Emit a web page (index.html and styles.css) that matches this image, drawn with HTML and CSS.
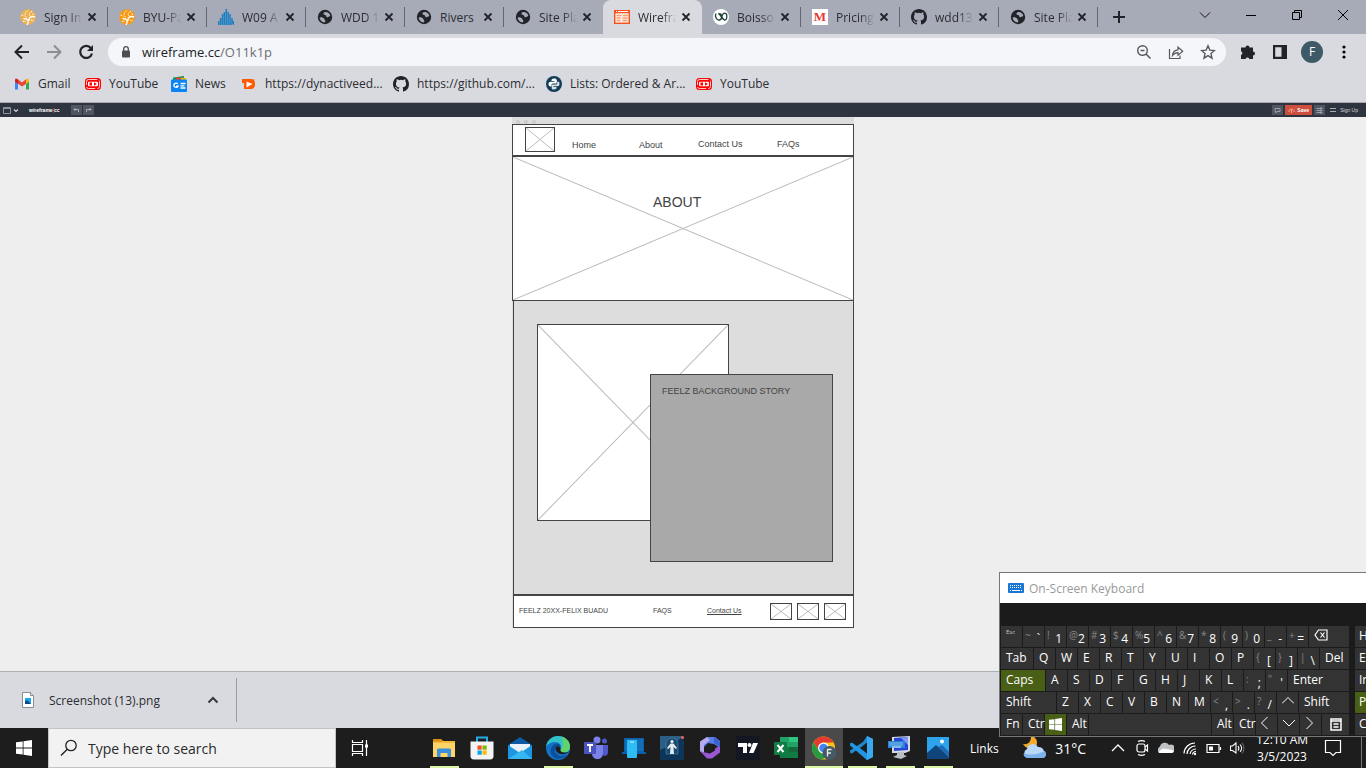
FILE: index.html
```html
<!DOCTYPE html>
<html lang="en">
<head>
<meta charset="utf-8">
<meta name="viewport" content="width=device-width, initial-scale=1">
<title>Wireframe.cc</title>
<link rel="stylesheet" href="styles.css">
</head>
<body>
<svg class="defs" aria-hidden="true">
  <defs>
    <symbol id="globe" viewBox="0 0 16 16"><circle cx="8" cy="8" r="7.200" fill="#202428"/><path d="M8.500 3c-1.500.3-2.300 1.200-2 2 .3.900 1.600.8 2.400 1.500.7.700.2 1.500 1.100 1.800.9.200 1.200-.6 2-.7 1 0 1.300-.6 1.200-1.400C12.700 4.600 10.800 3 8.500 3zM2.600 8.800c1.200-.7 2.800-.5 3.900.3.900.7.700 1.500 1.500 2.100.6.600.3 1.700-.3 2.200C5 13.200 2.900 11.400 2.600 8.800z" fill="#a8acb8"/></symbol>
    <symbol id="close" viewBox="0 0 16 16"><path d="M4.500 4.500l7 7M11.500 4.500l-7 7" stroke="#202428" stroke-width="1.800" fill="none"/></symbol>
    <symbol id="github" viewBox="0 0 16 16"><path fill="#202428" d="M8 0C3.580 0 0 3.580 0 8c0 3.540 2.290 6.530 5.470 7.590.4.070.55-.17.55-.38 0-.19-.01-.82-.01-1.490-2.010.37-2.530-.49-2.690-.94-.09-.23-.48-.94-.82-1.130-.28-.15-.68-.52-.01-.53.63-.01 1.080.58 1.230.82.72 1.210 1.870.87 2.330.66.070-.52.28-.87.51-1.070-1.780-.2-3.640-.89-3.640-3.950 0-.87.31-1.590.82-2.150-.08-.2-.36-1.020.08-2.120 0 0 .67-.21 2.200.82a7.600 7.600 0 0 1 4 0c1.530-1.040 2.200-.82 2.200-.82.44 1.100.16 1.920.08 2.120.51.56.82 1.270.82 2.150 0 3.070-1.870 3.750-3.650 3.950.29.25.54.73.54 1.480 0 1.070-.01 1.930-.01 2.200 0 .21.15.46.55.38A8 8 0 0 0 16 8c0-4.420-3.580-8-8-8z"/></symbol>
    <symbol id="youtube" viewBox="0 0 16 16"><rect x="0" y="2" width="16" height="12" rx="3.500" fill="#f00"/><rect x="1.500" y="3.500" width="13" height="9" rx="2" fill="none" stroke="#fff" stroke-width=".8" stroke-dasharray="9 2"/><rect x="3" y="5.700" width="10" height="4.600" rx="1" fill="#fff"/><path d="M4.500 6.500h2.500v3H4.500zM9 6.300l3 1.700-3 1.700z" fill="#f00"/></symbol>
    <symbol id="swirl" viewBox="0 0 16 16"><circle cx="8" cy="8" r="7.700" fill="currentColor"/><path d="M7 16C9.500 12 8 9.500 3.500 9.500M9 12C8.500 8.500 11 6.500 15 8" stroke="#fff" stroke-width="1.400" fill="none"/><path d="M6.500 8C4 6.500 5 3 8 1.500M10 7C8.500 5 9.500 3 12 2.500M1.500 6l3 1M3 12.500l3-.5M11 11l3 1M12.500 5l1.500.5" stroke="#fff" stroke-width="1" stroke-dasharray="1.500 1" fill="none"/></symbol>
    <symbol id="cross" viewBox="0 0 100 100" preserveAspectRatio="none"><path d="M0 0L100 100M100 0L0 100" stroke="#bbb" stroke-width="1" vector-effect="non-scaling-stroke" fill="none"/></symbol>
    <symbol id="winlogo" viewBox="0 0 16 16"><path fill="#fff" d="M0 2.300L6.700 1.400v6.200H0zM7.500 1.300L16 0v7.600H7.500zM0 8.400h6.700v6.200L0 13.700zM7.500 8.400H16V16l-8.500-1.300z"/></symbol>
  </defs>
</svg>

<header class="browser">
  <div class="tabstrip">
    <nav class="tabs" aria-label="Tabs">
      <div class="tab"><svg class="ico gold-light"><use href="#swirl"/></svg><a class="tab-title" href="#">Sign In</a><button class="tab-close" aria-label="Close tab"><svg class="ico"><use href="#close"/></svg></button></div>
      <div class="tab"><svg class="ico gold"><use href="#swirl"/></svg><a class="tab-title" href="#">BYU-Pa</a><button class="tab-close" aria-label="Close tab"><svg class="ico"><use href="#close"/></svg></button></div>
      <div class="tab"><svg class="ico" viewBox="0 0 16 16"><path d="M.7 16v-4M2.600 16V9M4.500 16V5M6.400 16V3M8.300 16V0M10.200 16V3M12.100 16V5M14 16V9M15.600 16v-4" stroke="#1b7fc4" stroke-width="1.500" fill="none"/></svg><a class="tab-title" href="#">W09 A</a><button class="tab-close" aria-label="Close tab"><svg class="ico"><use href="#close"/></svg></button></div>
      <div class="tab"><svg class="ico"><use href="#globe"/></svg><a class="tab-title" href="#">WDD 1</a><button class="tab-close" aria-label="Close tab"><svg class="ico"><use href="#close"/></svg></button></div>
      <div class="tab"><svg class="ico"><use href="#globe"/></svg><a class="tab-title full" href="#">Rivers</a><button class="tab-close" aria-label="Close tab"><svg class="ico"><use href="#close"/></svg></button></div>
      <div class="tab no-sep"><svg class="ico"><use href="#globe"/></svg><a class="tab-title" href="#">Site Pla</a><button class="tab-close" aria-label="Close tab"><svg class="ico"><use href="#close"/></svg></button></div>
      <div class="tab active"><svg class="ico" viewBox="0 0 16 16"><rect x=".7" y="1.700" width="14.600" height="12.600" fill="#fdeee6" stroke="#f4511e" stroke-width="1.400"/><path d="M0 3h16" stroke="#f4511e" stroke-width="2.500"/><path d="M2 2.500h1M4 2.500h10" stroke="#fff"/><path d="M2.500 6.500h5M2.500 9h4M2.500 11.500h4M9 6.500h5M8.500 9h5M8.500 11.500h5" stroke="#f9a077" stroke-width="1.500"/></svg><a class="tab-title" href="#" aria-current="page">Wirefra</a><button class="tab-close" aria-label="Close tab"><svg class="ico"><use href="#close"/></svg></button></div>
      <div class="tab"><svg class="ico" viewBox="0 0 16 16"><circle cx="8" cy="8" r="8" fill="#fff"/><path d="M3 4.500c-1.500 3 .5 7 3.500 6.500S9 5 5.500 4.500c2 1.500 3.500 5 5.500 6M7.500 4.500c1 3 2 6 4 6.500s3.500-4 1.500-6.500c-2-1-4 .5-4 3" fill="none" stroke="#173f33" stroke-width="1.300"/></svg><a class="tab-title" href="#">Boisso</a><button class="tab-close" aria-label="Close tab"><svg class="ico"><use href="#close"/></svg></button></div>
      <div class="tab"><span class="m-logo">M</span><a class="tab-title" href="#">Pricing</a><button class="tab-close" aria-label="Close tab"><svg class="ico"><use href="#close"/></svg></button></div>
      <div class="tab"><svg class="ico"><use href="#github"/></svg><a class="tab-title" href="#">wdd13</a><button class="tab-close" aria-label="Close tab"><svg class="ico"><use href="#close"/></svg></button></div>
      <div class="tab"><svg class="ico"><use href="#globe"/></svg><a class="tab-title" href="#">Site Pla</a><button class="tab-close" aria-label="Close tab"><svg class="ico"><use href="#close"/></svg></button></div>
      <button class="new-tab" aria-label="New tab"><svg width="14" height="14" viewBox="0 0 14 14"><path d="M7 1v12M1 7h12" stroke="#202428" stroke-width="2"/></svg></button>
    </nav>
    <div class="win-controls">
      <button aria-label="Search tabs"><svg width="12" height="12" viewBox="0 0 12 12"><path d="M1 3.500l5 5 5-5" fill="none" stroke="#111"/></svg></button>
      <button aria-label="Minimize"><svg width="12" height="12" viewBox="0 0 12 12"><path d="M1 6.500h10" stroke="#000"/></svg></button>
      <button aria-label="Restore"><svg width="12" height="12" viewBox="0 0 12 12"><path d="M1.500 3.500h7v7h-7zM3.500 3.500v-2h7v7h-2" fill="none" stroke="#000"/></svg></button>
      <button aria-label="Close window"><svg width="12" height="12" viewBox="0 0 12 12"><path d="M1 1l10 10M11 1L1 11" stroke="#000"/></svg></button>
    </div>
  </div>

  <div class="toolbar">
    <button class="tool" aria-label="Back"><svg class="ico" viewBox="0 0 16 16"><path d="M15 8H2M8 1.500L1.500 8 8 14.500" fill="none" stroke="#202428" stroke-width="2"/></svg></button>
    <button class="tool" aria-label="Forward"><svg class="ico" viewBox="0 0 16 16"><path d="M1 8h13M8 1.500L14.500 8 8 14.500" fill="none" stroke="#8b8d93" stroke-width="2"/></svg></button>
    <button class="tool" aria-label="Reload"><svg class="ico" viewBox="0 0 16 16"><path d="M13 4.300A6 6 0 1 0 14 9.500" fill="none" stroke="#202428" stroke-width="2.200"/><path d="M15 1v6H9z" fill="#202428"/></svg></button>
    <div class="omnibox">
      <svg class="lock" width="10" height="12" viewBox="0 0 10 12"><rect x="1" y="4.500" width="8" height="7" rx="1" fill="#4b4e54"/><path d="M2.700 5V3a2.300 2.300 0 0 1 4.600 0v2" fill="none" stroke="#4b4e54" stroke-width="1.300"/></svg>
      <a class="url" href="#">wireframe.cc<span>/O11k1p</span></a>
      <button class="tool" aria-label="Zoom"><svg class="ico" viewBox="0 0 16 16"><circle cx="6.500" cy="6.500" r="4.800" fill="none" stroke="#55585e" stroke-width="1.400"/><path d="M10 10l4.500 4.500M4.500 6.500h4" stroke="#55585e" stroke-width="1.500"/></svg></button>
      <button class="tool" aria-label="Share"><svg class="ico" viewBox="0 0 16 16"><path d="M1.500 5v9.500h10.500v-3M4.500 11.500c.3-4 2.500-5.500 5.500-5.700V3l4.700 4.300-4.700 4V8.700c-2.500 0-4 .8-5.500 2.800z" fill="none" stroke="#55585e" stroke-width="1.200"/></svg></button>
      <button class="tool" aria-label="Bookmark"><svg class="ico" viewBox="0 0 16 16"><path d="M8 1.800l1.800 4.300 4.700.4-3.500 3.100 1 4.600-4-2.500-4 2.500 1-4.600L1.500 6.500l4.700-.4z" fill="none" stroke="#55585e" stroke-width="1.400"/></svg></button>
    </div>
    <button class="tool" aria-label="Extensions"><svg class="ico" viewBox="0 0 16 16"><path d="M1 3.500h4.500a2 2 0 1 1 4 0H13v4a2 2 0 1 1 0 4V15H9.300a1.900 1.900 0 0 0-3.700 0H1v-4a2 2 0 0 0 0-3.800z" fill="#202428"/></svg></button>
    <button class="tool" aria-label="Side panel"><svg class="ico" viewBox="0 0 16 16"><path d="M1 1h14v14H1zM3.200 3.200v9.600h6.300V3.200z" fill="#202428" fill-rule="evenodd"/></svg></button>
    <button class="tool" aria-label="Profile"><span class="avatar">F</span></button>
    <button class="tool" aria-label="Menu"><svg class="ico" viewBox="0 0 16 16"><circle cx="8" cy="3" r="1.600"/><circle cx="8" cy="8" r="1.600"/><circle cx="8" cy="13" r="1.600"/></svg></button>
  </div>

  <nav class="bookmarks" aria-label="Bookmarks">
    <a href="#"><svg class="ico" viewBox="0 0 16 16"><path d="M1 3.500v10h3V7z" fill="#4285f4"/><path d="M15 3.500v10h-3V7z" fill="#34a853"/><path d="M1 3.800C1 2.500 2.500 2 3.500 3L8 6.500v4L1 5.500z" fill="#ea4335"/><path d="M8 6.500L12.500 3v4.500L8 10.500z" fill="#ea4335"/><path d="M12 3.400c1.500-1.400 3-.6 3 .8v1.500l-3 2.200z" fill="#fbbc04"/><path d="M1 3.800v1.800l3 2.200V3.300z" fill="#c5221f"/></svg>Gmail</a>
    <a href="#"><svg class="ico"><use href="#youtube"/></svg>YouTube</a>
    <a href="#"><svg class="ico" viewBox="0 0 16 16"><path d="M2 1.500L13 0v5H2z" fill="#0f9d58"/><path d="M9 2h6v4H9z" fill="#fbbc04"/><path d="M5 1.500h5V5H5z" fill="#ea4335"/><rect y="3.500" width="16" height="12.500" rx="1" fill="#0b84f3"/><path d="M6.800 7.800a2.200 2.200 0 1 0 .3 2.400H5M9.500 7.500h5M9.500 9.800h4M9.500 12h5" fill="none" stroke="#fff" stroke-width="1.300"/></svg>News</a>
    <a href="#"><svg class="ico" viewBox="0 0 16 16"><path d="M1 3h9c3 0 4 2.300 4 5s-1 5-4 5H3V7H1z" fill="#ff5a00"/><path d="M5.500 5.500l6 2.500-6 3.500V8z" fill="#fff"/><path d="M12 3h2v2z" fill="#f7a070"/></svg>https://dynactiveed...</a>
    <a href="#"><svg class="ico"><use href="#github"/></svg>https://github.com/...</a>
    <a href="#"><svg class="ico" viewBox="0 0 16 16"><circle cx="8" cy="8" r="8" fill="#123d58"/><path d="M8 2.500c-2.500 0-2.500 1-2.500 2.500h3v.8H4.500C3 6 2.500 7 2.500 8.200S3 10.500 4.500 10.500h1V9c0-1 .8-1.500 1.700-1.500h2.300c.8 0 1.300-.5 1.300-1.300V4.500C10.500 3 10 2.500 8 2.500z" fill="#fff"/><path d="M8 13.500c2.500 0 2.500-1 2.500-2.500h-3v-.8h4c1.500-.2 2-1 2-2.400S13 5.500 11.500 5.500h-.3v1.700c0 .8-.8 1.300-1.700 1.300H7c-.8 0-1.300.5-1.300 1.300v1.700C5.500 13 6 13.500 8 13.500z" fill="#d8dde2"/></svg>Lists: Ordered &amp; Ar...</a>
    <a href="#"><svg class="ico"><use href="#youtube"/></svg>YouTube</a>
  </nav>
</header>

<div class="appbar">
  <button class="app-btn" aria-label="Viewport"><svg width="16" height="9" viewBox="0 0 16 9"><path d="M.5 1.500h7v6h-7zM.5 2.500h7" fill="none" stroke="#8d939c"/><path d="M11 3.500l2 2 2-2" fill="none" stroke="#cdd1d6" stroke-width="1.200"/></svg></button>
  <a class="wf-logo" href="#">wireframe<span>|</span>cc</a>
  <div class="history">
    <button class="app-btn grey" aria-label="Undo"><svg width="7" height="7" viewBox="0 0 7 7"><path d="M1 2.500h4.500V5M2.500 1L1 2.500 2.500 4" fill="none" stroke="#a7acb3"/></svg></button>
    <button class="app-btn grey" aria-label="Redo"><svg width="7" height="7" viewBox="0 0 7 7"><path d="M6 2.500H1.500V5M4.500 1L6 2.500 4.500 4" fill="none" stroke="#a7acb3"/></svg></button>
  </div>
  <div class="app-actions">
    <button class="app-btn grey" aria-label="Comments"><svg width="7" height="7" viewBox="0 0 7 7"><path d="M1 1.500h5v3H3L2 6V4.500H1z" fill="none" stroke="#989da5"/></svg></button>
    <button class="save"><svg width="7" height="7" viewBox="0 0 7 7"><path d="M1 5V3.500L3 2l2 .5 1 1V5M3.500 3v3" fill="none" stroke="#f1a89c"/></svg>Save</button>
    <button class="app-btn grey" aria-label="Settings"><svg width="7" height="7" viewBox="0 0 7 7"><path d="M.5 1.500h6M.5 3.500h6M.5 5.500h6M5 0v7" stroke="#a2a7ae" stroke-width=".9"/></svg></button>
    <button class="app-btn menu" aria-label="Menu"><svg width="6" height="6" viewBox="0 0 6 6"><path d="M0 1.500h6M0 4.500h6" stroke="#a7acb3"/></svg></button>
    <a class="signup" href="#">Sign Up</a>
  </div>
</div>

<main class="canvas">
  <div class="frame">
    <div class="frame-dots"><i></i><i></i><i></i></div>
    <div class="box wf-head">
      <svg class="pic logo"><use href="#cross"/></svg>
      <nav class="wf-nav"><a href="#">Home</a><a href="#">About</a><a class="raised" href="#">Contact Us</a><a class="raised" href="#">FAQs</a></nav>
    </div>
    <div class="box wf-hero">
      <svg class="hero-cross"><use href="#cross"/></svg>
      <h1>ABOUT</h1>
    </div>
    <section class="box wf-body">
      <svg class="pic photo"><use href="#cross"/></svg>
      <div class="story">FEELZ BACKGROUND STORY</div>
    </section>
    <footer class="box wf-foot">
      <span>FEELZ 20XX-FELIX BUADU</span>
      <a class="plain" href="#">FAQS</a>
      <a href="#">Contact Us</a>
      <div class="socials">
        <svg class="pic social"><use href="#cross"/></svg>
        <svg class="pic social"><use href="#cross"/></svg>
        <svg class="pic social"><use href="#cross"/></svg>
      </div>
    </footer>
  </div>
</main>

<div class="downloads">
  <svg width="12" height="16" viewBox="0 0 12 16"><path d="M.5.500h8l3 3v12H.5z" fill="#fff" stroke="#8b8d90"/><path d="M8.500.500v3h3" fill="#ddd" stroke="#8b8d90"/><rect x="3" y="6" width="6" height="6" fill="#1aa7ee"/><path d="M3 12V9.500l2-1.500 4 4z" fill="#0c4a86"/></svg>
  <a class="file" href="#">Screenshot (13).png</a>
  <button class="tool" aria-label="More"><svg width="12" height="12" viewBox="0 0 12 12"><path d="M1.500 8.500L6 4l4.500 4.500" fill="none" stroke="#35383d" stroke-width="2"/></svg></button>
</div>

<footer class="taskbar">
  <button class="start" aria-label="Start"><svg class="ico"><use href="#winlogo"/></svg></button>
  <label class="search"><svg width="18" height="18" viewBox="0 0 18 18"><circle cx="11" cy="6.500" r="5.200" fill="none" stroke="#222" stroke-width="1.300"/><path d="M7.300 10.300L1 16.500" stroke="#222" stroke-width="1.400"/></svg><input type="text" placeholder="Type here to search" aria-label="Type here to search"></label>
  <button class="taskview" aria-label="Task view"><svg width="18" height="16" viewBox="0 0 18 16"><path d="M1.500 0v2.500h10V0M1.500 16v-2.500h10V16M1.500 4.500h10v7h-10zM15.500 0v16" fill="none" stroke="#fff" stroke-width="1.200"/><rect x="14" y="4.500" width="3" height="3" fill="#fff"/></svg></button>
  <div class="apps">
    <button class="app open" aria-label="File Explorer"><svg class="big" viewBox="0 0 24 24"><path d="M1 3h8l2 2h12v16H1z" fill="#f5b93c"/><path d="M1 3h8l1.500 2.500H1z" fill="#d98f0d"/><path d="M1 7h22v14H1z" fill="#ffd567"/><path d="M5 21v-7c0-1 .5-1.500 1.500-1.500h11c1 0 1.500.5 1.500 1.500v7h-3.500v-4h-7v4z" fill="#3b8fdc"/></svg></button>
    <button class="app" aria-label="Store"><svg class="big" viewBox="0 0 24 24"><path d="M7 6V1.500h10V6" fill="none" stroke="#27a9e8" stroke-width="2"/><path d="M.5 5.500h23V20c0 2-1 3.500-3.500 3.500H4C1.500 23.500.5 22 .5 20z" fill="#f4f4f4"/><path d="M7.500 9.500h4.200v4.200H7.500z" fill="#f25022"/><path d="M12.500 9.500h4.200v4.200h-4.200z" fill="#7fba00"/><path d="M7.500 14.500h4.200v4.200H7.500z" fill="#00a4ef"/><path d="M12.500 14.500h4.200v4.200h-4.200z" fill="#ffb900"/></svg></button>
    <button class="app" aria-label="Mail"><svg class="big" viewBox="0 0 24 24"><path d="M0 9L12 1l12 8v3H0z" fill="#0c59a4"/><path d="M2 8h20v8H2z" fill="#e9f2fa"/><path d="M0 9l12 8 12-8v14H0z" fill="#1c97e0"/><path d="M0 23l14-9 10 9z" fill="#35b8f1"/></svg></button>
    <button class="app open" aria-label="Edge"><svg class="big" viewBox="0 0 24 24"><circle cx="12" cy="12" r="12" fill="#1272c4"/><path d="M0 11C1 4 6 0 12 0c7 0 12 5 12 10.500 0 4-3 6-6 6-3.500 0-4.500-1.500-3.500-3C17 9 12 5.500 8 6 4 6.300 1 9 0 11z" fill="#33c1c9"/><path d="M15 .5c5 1.500 9 5 9 10 0 4-3 6-6 6-3.500 0-4.500-1.500-3.500-3 3-3 4-7 .5-13z" fill="#62d36b"/><path d="M14.500 10.500c-3-1-6 1-5.500 4.500.5 4 6 6.500 12 4-5 5-12 5-15 .5C3 15 5 8 11 7.500c2 0 3.500 1.500 3.500 3z" fill="#0b4f9c"/><path d="M14.500 13.500c.5-3-3.500-4.500-5-1.500 0 4 4 7 9 6 2-.5 3.500-1 4-2-3 1.200-9 .5-8-2.500z" fill="#1d1d1d"/></svg></button>
    <button class="app" aria-label="Teams"><svg class="big" viewBox="0 0 24 24"><circle cx="13" cy="4" r="3.500" fill="#7b83eb"/><circle cx="20.500" cy="5" r="2.500" fill="#5059c9"/><path d="M17 9h7v7c0 3-2 4-4.500 4z" fill="#5059c9"/><path d="M8 9h11v8c0 4-2.500 6-5.500 6S8 21 8 17z" fill="#7b83eb"/><rect y="6" width="12" height="12" rx="1" fill="#4b53bc"/><path d="M3 9h6M6 9v7" stroke="#fff" stroke-width="1.800"/></svg></button>
    <button class="app" aria-label="Phone Link"><svg class="big" viewBox="0 0 24 24"><path d="M2 2h20v14h2v2H0v-2h2z" fill="#0b5fa8"/><path d="M3 3h18v12H3z" fill="#1270b8"/><rect x="5" y="4" width="10" height="18" rx="1" fill="#2fbdf5"/><path d="M8 6h4" stroke="#d9f2ff"/></svg></button>
    <button class="app" aria-label="Gospel Library"><svg class="big" viewBox="0 0 24 24"><rect width="24" height="24" fill="#0c3557"/><path d="M0 0h24L12 9 0 14z" fill="#2c5f86"/><path d="M6 18V8a6 6 0 0 1 12 0v10z" fill="#174a73" stroke="#5d86a6" stroke-width=".6"/><circle cx="12" cy="5.500" r="1.500" fill="#fff"/><path d="M10.500 7.500h3l3.500 4.500-1 1-2.500-2 .5 7h-4l.5-7-2.500 2-1-1z" fill="#e6eaee"/><circle cx="22.500" cy="1.500" r="1.500" fill="#ff5a5a"/></svg></button>
    <button class="app" aria-label="Microsoft 365"><svg class="big" viewBox="0 0 24 24"><path d="M9 1h8l5 4v7l-6-4-6-1-4 4v7l-4-3V6z" fill="#5b7de8"/><path d="M9 1L2 5.500V15l4 3V9l6-5z" fill="#b7a9ee"/><path d="M2 15l7 7.500h5l8-6v-7l-5 3v2l-5 3-5-1z" fill="#9a57d3"/><path d="M16 7l6 4V6l-6-5z" fill="#3a62cf"/></svg></button>
    <button class="app" aria-label="TradingView"><svg class="big" viewBox="0 0 24 24"><rect width="24" height="24" fill="#131722"/><path d="M2 7h9v10H7v-6H2zM17 7h5l-4.500 10H13z" fill="#fff"/><circle cx="13.500" cy="9" r="2" fill="#fff"/></svg></button>
    <button class="app" aria-label="Excel"><svg class="big" viewBox="0 0 24 24"><path d="M6 1h18v21H6z" fill="#21a366"/><path d="M6 11h18v11H6z" fill="#107c41"/><path d="M15 1h9v5h-9z" fill="#33c481"/><path d="M15 11h9v5h-9z" fill="#185c37" opacity=".6"/><rect y="6" width="13" height="13" rx="1" fill="#107c41"/><path d="M3.500 9l6 7M9.500 9l-6 7" stroke="#fff" stroke-width="2"/></svg></button>
    <button class="app open current" aria-label="Chrome"><svg class="big" viewBox="0 0 24 24"><circle cx="11.500" cy="12" r="11.500" fill="#fbc116"/><path d="M1.500 6.200A11.500 11.500 0 0 1 21.500 6.500H11.500L7 15z" fill="#e33b2e"/><path d="M1.500 6.200A11.500 11.500 0 0 0 11 23.500L15 16 6.500 14z" fill="#249a41"/><circle cx="11.500" cy="12" r="5.500" fill="#fff"/><circle cx="11.500" cy="12" r="4.300" fill="#4285f4"/><circle cx="17.500" cy="17" r="7" fill="#455a64"/><path d="M15.500 20.500v-7h4M15.500 17h3.500" fill="none" stroke="#e8eef0" stroke-width="1.300"/></svg></button>
    <button class="app open" aria-label="Visual Studio Code"><svg class="big" viewBox="0 0 24 24"><path d="M17 0l6 3v18l-6 3L6.500 14 2 17.500 0 16.500v-2L13 6v0z" fill="#1f8ad2"/><path d="M0 7.500L2 6.500 17 18v6L0 9.500z" fill="#2196e3"/><path d="M17 0l6 3v18l-6 3z" fill="#3aa9f2"/><path d="M17 6.500v11L10 12z" fill="#1d1d1d"/></svg></button>
    <button class="app open" aria-label="On-Screen Keyboard"><svg class="big" viewBox="0 0 24 24"><path d="M4 1l18-1v15l-5 2H4z" fill="#d4d9e2"/><path d="M6 2l14-1v13L6 15z" fill="#2746d8"/><path d="M13 2l7-1v8z" fill="#7f9af5"/><rect x="0" y="5" width="17" height="7" fill="#2585d8"/><path d="M1.500 7h14M1.500 9h14" stroke="#e9f3fb" stroke-dasharray="1 1"/><path d="M4 11h9" stroke="#e9f3fb"/><path d="M9 16h7v3l3 1-6 3-8-2 4-2z" fill="#b9bdc4"/></svg></button>
    <button class="app open" aria-label="Photos"><svg class="big" viewBox="0 0 24 24"><rect x="1" y="1" width="22" height="22" fill="#2ea3ec"/><path d="M1 17l9-8 13 12v2H1z" fill="#10457c"/><path d="M12 11l4-2 7 7v5z" fill="#2069b4"/><circle cx="16" cy="5.500" r="2" fill="#fff"/></svg></button>
  </div>
  <span class="links">Links</span>
  <button class="weather"><svg width="26" height="24" viewBox="0 0 26 24"><path d="M9 0c6 1 8 7 4 12C9 14 3 12 1 8c6 1 8-3 8-8z" fill="#f2a92c"/><path d="M5 22a5 5 0 0 1 0-9 6 6 0 0 1 11-2 6 6 0 0 1 6 4 4 4 0 0 1-1 7z" fill="#b9d7f8"/><path d="M5 22c-3-1-4-3-3-5 6 3 15 1 21-2 2 3 1 7-2 7z" fill="#7fb0ee"/></svg>31°C</button>
  <div class="tray">
    <button aria-label="Show hidden icons"><svg class="ico" viewBox="0 0 16 16"><path d="M2 11l6-6 6 6" fill="none" stroke="#fff" stroke-width="1.300"/></svg></button>
    <button aria-label="Meet Now"><svg class="ico" viewBox="0 0 16 16"><rect x="3" y="4" width="8" height="8" rx="2" fill="none" stroke="#fff" stroke-width="1.200"/><path d="M11 7l2.500-2v6L11 9M4 1.500c2-1 5-1 7 0M4 14.500c2 1 5 1 7 0" fill="none" stroke="#fff" stroke-width="1.200"/></svg></button>
    <button aria-label="OneDrive"><svg class="ico" viewBox="0 0 16 16"><path d="M1 13a4 4 0 0 1 1-6.500A5 5 0 0 1 11 5a4 4 0 0 1 4 7.500z" fill="#bfc2c5"/><path d="M1 13c0-3 4-5 7-4l7 1c1 1 0 3-1 3z" fill="#fff"/></svg></button>
    <button aria-label="Network"><svg class="ico" viewBox="0 0 16 16"><path d="M2 13.500A11 11 0 0 1 13 3M5 14a8.500 8.500 0 0 1 8.500-8M8 14a6 6 0 0 1 6-5M10.500 14.500a3.500 3.500 0 0 1 3.500-3" fill="none" stroke="#fff" stroke-width="1.200"/><circle cx="13" cy="14" r="1.200" fill="#fff"/></svg></button>
    <button aria-label="Battery"><svg class="ico" viewBox="0 0 16 16"><path d="M1 4.500h12v8H1zM14.500 7v3" fill="none" stroke="#fff" stroke-width="1.200"/><rect x="3" y="6.500" width="4" height="4" fill="#fff"/></svg></button>
    <button aria-label="Volume"><svg class="ico" viewBox="0 0 16 16"><path d="M.5 6h2L6 3v10L2.500 10.500h-2z" fill="none" stroke="#fff" stroke-width="1.100"/><path d="M8 6c1 1.300 1 3.200 0 4.500M10 4.500c2 2.200 2 5.300 0 7.500" fill="none" stroke="#fff" stroke-width="1.100"/><path d="M12 3c2.500 3 2.500 7.500 0 10.500" fill="none" stroke="#777"/></svg></button>
  </div>
  <div class="clock"><time>12:10 AM</time><time>3/5/2023</time></div>
  <button class="notify" aria-label="Notifications"><svg width="18" height="18" viewBox="0 0 18 18"><path d="M1.500 1.500h15v12H12L9 16.500l-3-3H1.500z" fill="none" stroke="#fff" stroke-width="1.200"/></svg></button>
</footer>

<section class="osk" aria-label="On-Screen Keyboard">
  <div class="osk-title"><svg width="16" height="10" viewBox="0 0 16 10"><rect width="16" height="10" rx="1" fill="#1976d2"/><path d="M2 2.500h12M2 4.500h12" stroke="#fff" stroke-dasharray="1 1"/><path d="M2 7.500h1M4 7.500h8M13 7.500h1" stroke="#fff"/></svg>On-Screen Keyboard</div>
  <div class="osk-keys">
    <div class="row">
      <button class="key tiny">Esc</button><button class="key two"><s>~</s>`</button><button class="key two"><s>!</s>1</button><button class="key two"><s>@</s>2</button><button class="key two"><s>#</s>3</button><button class="key two"><s>$</s>4</button><button class="key two"><s>%</s>5</button><button class="key two"><s>^</s>6</button><button class="key two"><s>&amp;</s>7</button><button class="key two"><s>*</s>8</button><button class="key two"><s>(</s>9</button><button class="key two"><s>)</s>0</button><button class="key two"><s>_</s>-</button><button class="key two"><s>+</s>=</button><button class="key fill" aria-label="Backspace"><svg width="14" height="12" viewBox="0 0 14 12"><path d="M4.500 1h8.500v10H4.500L1 6zM6.500 3.500l4 5M10.500 3.500l-4 5" fill="none" stroke="#fff" stroke-width="1.200"/></svg></button><button class="key side">H</button>
    </div>
    <div class="row">
      <button class="key w32">Tab</button><button class="key">Q</button><button class="key">W</button><button class="key">E</button><button class="key">R</button><button class="key">T</button><button class="key">Y</button><button class="key">U</button><button class="key">I</button><button class="key">O</button><button class="key">P</button><button class="key two"><s>{</s>[</button><button class="key two"><s>}</s>]</button><button class="key two"><s>|</s>\</button><button class="key fill">Del</button><button class="key side">E</button>
    </div>
    <div class="row">
      <button class="key w44 on">Caps</button><button class="key">A</button><button class="key">S</button><button class="key">D</button><button class="key">F</button><button class="key">G</button><button class="key">H</button><button class="key">J</button><button class="key">K</button><button class="key">L</button><button class="key two"><s>:</s>;</button><button class="key two"><s>"</s>'</button><button class="key fill">Enter</button><button class="key side">In</button>
    </div>
    <div class="row">
      <button class="key w55">Shift</button><button class="key">Z</button><button class="key">X</button><button class="key">C</button><button class="key">V</button><button class="key">B</button><button class="key">N</button><button class="key">M</button><button class="key two"><s>&lt;</s>,</button><button class="key two"><s>&gt;</s>.</button><button class="key two"><s>?</s>/</button><button class="key" aria-label="Up"><svg width="12" height="12" viewBox="0 0 12 12"><path d="M0 8.500l6-6 6 6" fill="none" stroke="#fff"/></svg></button><button class="key fill">Shift</button><button class="key side on">P</button>
    </div>
    <div class="row">
      <button class="key">Fn</button><button class="key">Ctr</button><button class="key on icon" aria-label="Windows"><svg width="13" height="13"><use href="#winlogo"/></svg></button><button class="key">Alt</button><button class="key fill" aria-label="Space"></button><button class="key">Alt</button><button class="key">Ctr</button><button class="key" aria-label="Left"><svg width="12" height="12" viewBox="0 0 12 12"><path d="M6.500 0l-6 6 6 6" fill="none" stroke="#fff"/></svg></button><button class="key" aria-label="Down"><svg width="12" height="12" viewBox="0 0 12 12"><path d="M0 3l6 6 6-6" fill="none" stroke="#fff"/></svg></button><button class="key" aria-label="Right"><svg width="12" height="12" viewBox="0 0 12 12"><path d="M1.500 0l6 6-6 6" fill="none" stroke="#fff"/></svg></button><button class="key w27 icon" aria-label="Menu"><svg width="12" height="13" viewBox="0 0 12 13"><path d="M1 1h10v11H1zM1 3h10M3.500 6h5M3.500 9h5" fill="none" stroke="#fff" stroke-width="1.500"/></svg></button><button class="key side">C</button>
    </div>
  </div>
</section>
</body>
</html>
```

FILE: styles.css
```css
* { box-sizing: border-box; }

body {
  margin: 0;
  height: 100vh;
  position: relative;
  display: flex;
  flex-direction: column;
  overflow: hidden;
  font-family: "Open Sans", "Noto Sans", sans-serif;
  font-size: 12px;
  color: #2b2d31;
  background: #eee;
}

button {
  margin: 0;
  padding: 0;
  border: 0;
  background: none;
  font: inherit;
  color: inherit;
}

a { color: inherit; text-decoration: none; }
svg { display: block; flex: none; }
.defs { position: absolute; width: 0; height: 0; }
.ico { width: 16px; height: 16px; }

/* Tab strip */
.tabstrip {
  display: flex;
  justify-content: space-between;
  height: 34px;
  background: #a7abb7;
}
.tabs { display: flex; align-items: center; padding-left: 9px; }
.tab {
  display: flex;
  align-items: center;
  width: 99px;
  height: 34px;
  padding: 0 8px 0 11px;
  background: linear-gradient(#63666e, #63666e) right center / 1px 20px no-repeat;
}
.tab.no-sep { background: none; }
.tab.active {
  background: #d9dadf;
  border-radius: 8px 8px 0 0;
}
.tab-title {
  flex: 1;
  margin-left: 8px;
  overflow: hidden;
  white-space: nowrap;
  -webkit-mask-image: linear-gradient(90deg, #000 60%, transparent 96%);
  mask-image: linear-gradient(90deg, #000 60%, transparent 96%);
}
.tab-title.full { -webkit-mask-image: none; mask-image: none; }
.gold { color: #f59a12; }
.gold-light { color: #ecb04e; }
.m-logo {
  width: 16px;
  background: #fff;
  color: #e53935;
  font: bold 13px/16px "Liberation Serif", serif;
  text-align: center;
}
.new-tab { padding: 0 14px; }
.win-controls { display: flex; height: 29px; }
.win-controls button { display: grid; place-items: center; width: 46px; }

/* Toolbar */
.toolbar {
  display: flex;
  align-items: center;
  gap: 4px;
  height: 36px;
  padding: 0 8px;
  background: #d9dadf;
}
.tool { display: grid; place-items: center; width: 28px; height: 28px; }
.omnibox {
  display: flex;
  flex: 1;
  align-items: center;
  gap: 4px;
  height: 28px;
  margin: 0 4px;
  padding: 0 4px 0 13px;
  border-radius: 14px;
  background: #f5f6f9;
}
.url { flex: 1; padding-left: 7px; font-size: 13px; color: #202428; }
.url span { color: #6b6e74; }
.avatar {
  width: 22px;
  border-radius: 50%;
  background: #3d5a66;
  color: #fff;
  line-height: 22px;
}

/* Bookmarks */
.bookmarks {
  display: grid;
  grid-template-columns: 71px 86px 70px 152px 153px 150px auto;
  height: 33px;
  padding: 0 14px 5px;
  border-bottom: 1px solid #a9abb0;
  background: #d9dadf;
}
.bookmarks a { display: flex; align-items: center; gap: 8px; white-space: nowrap; }

/* Wireframe app bar */
.appbar {
  display: flex;
  align-items: center;
  height: 14px;
  padding: 0 8px 0 3px;
  background: #2e3541;
  font: 5px/10px "Liberation Sans", sans-serif;
  color: #d5d8dc;
}
.wf-logo { margin: 0 11px 0 10px; font-weight: bold; color: #fff; }
.wf-logo span { color: #e04a35; }
.history { display: flex; gap: 1px; }
.grey { display: grid; place-items: center; width: 11px; height: 10px; background: #4f5661; }
.app-actions { display: flex; align-items: center; gap: 2px; margin-left: auto; }
.save {
  display: flex;
  align-items: center;
  justify-content: center;
  gap: 2px;
  width: 27px;
  height: 10px;
  background: #cf4f3e;
  color: #fff;
  font-weight: bold;
}
.menu { margin: 0 2px 0 3px; }

/* Canvas */
.canvas { flex: 1; min-height: 0; font-family: "Liberation Sans", Arial, sans-serif; color: #444; }
.frame { width: 342px; margin: 0 auto; background: #ddd; }
.frame-dots { display: flex; gap: 4px; height: 7px; padding: 3px 4px 0; }
.frame-dots i { width: 4px; height: 4px; border-radius: 50%; background: #ccc; }
.box { border: 1px solid #444; background: #fff; }
.pic { border: 1px solid #444; background: #fff; }
.wf-head { display: flex; height: 32px; padding: 2px 12px; }
.logo { width: 30px; height: 25px; }
.wf-nav {
  display: grid;
  grid-template-columns: 67px 59px 79px auto;
  align-items: center;
  height: 36px;
  margin-left: 17px;
  font-size: 9px;
  line-height: 11px;
}
.raised { padding-bottom: 2px; }
.wf-hero { display: grid; height: 145px; }
.wf-hero > * { grid-area: 1 / 1; }
.hero-cross { width: 100%; height: 100%; }
.wf-hero h1 { margin: 36px 0 0 140px; font-size: 14px; line-height: 18px; font-weight: normal; }
.wf-body {
  position: relative;
  height: 294px;
  margin-left: 1px;
  padding: 23px;
  border-top: 0;
  background: #ddd;
}
.photo { width: 192px; height: 197px; }
.story {
  position: absolute;
  top: 73px;
  right: 20px;
  width: 183px;
  height: 188px;
  padding: 10px 11px;
  border: 1px solid #444;
  background: #a9a9a9;
  font-size: 9px;
  line-height: 12px;
}
.wf-foot {
  display: grid;
  grid-template-columns: 134px 54px 63px auto;
  height: 33px;
  margin-left: 1px;
  padding: 7px 7px 0 5px;
  font-size: 7px;
  line-height: 16px;
}
.wf-foot a { text-decoration: underline; }
.wf-foot .plain { text-decoration: none; }
.socials { display: flex; gap: 5px; }
.social { width: 22px; height: 17px; }

/* Downloads shelf */
.downloads {
  display: flex;
  align-items: center;
  height: 57px;
  padding-left: 22px;
  border-top: 1px solid #adafb4;
  background: linear-gradient(#9a9ca1, #9a9ca1) 236px center / 1px 44px no-repeat #d9dadf;
}
.file { width: 135px; margin: 0 0 0 15px; }
.downloads .tool { margin-left: 15px; }

/* Taskbar */
.taskbar {
  display: flex;
  align-items: center;
  height: 40px;
  background: #1d1d1d;
  color: #fff;
}
.start { display: grid; place-items: center; width: 48px; height: 40px; }
.search {
  display: flex;
  align-items: center;
  gap: 10px;
  width: 288px;
  height: 40px;
  padding: 0 11px;
  border: 1px solid #c4c4c4;
  background: #f2f2f2;
}
.search input {
  flex: 1;
  min-width: 0;
  padding: 0;
  border: 0;
  background: none;
  font: 14px "Open Sans", sans-serif;
}
.search input::placeholder { color: #2b2b2b; opacity: 1; }
.taskview { display: grid; place-items: center; width: 48px; height: 40px; }
.apps { display: flex; margin-left: 41px; }
.app { display: grid; place-items: center; width: 38px; height: 40px; }
.big { width: 24px; height: 24px; }
.open { background: linear-gradient(#dcf5a5, #dcf5a5) center bottom / 29px 2px no-repeat; }
.current { background-size: 38px 2px; background-color: #4a4a4a; }
.links { margin-left: 13px; }
.weather { display: flex; align-items: center; gap: 7px; margin-left: auto; font-size: 14px; }
.tray { display: flex; margin-left: 20px; }
.tray button { display: grid; place-items: center; width: 24px; height: 40px; }
.clock { display: grid; width: 64px; line-height: 17px; text-align: center; }
.notify {
  display: grid;
  place-items: center;
  width: 48px;
  height: 40px;
  margin-right: 4px;
  padding-right: 9px;
  border-right: 1px solid #777;
}

/* On-screen keyboard window */
.osk {
  position: absolute;
  right: 0;
  bottom: 31px;
  width: 367px;
  border: 1px solid #777;
  border-right: 0;
  background: #1b1b1b;
  overflow: hidden;
  color: #fff;
}
.osk-title {
  display: flex;
  align-items: center;
  gap: 5px;
  height: 30px;
  padding-left: 8px;
  background: #fff;
  color: #999;
}
.osk-keys { display: grid; gap: 1px; padding: 23px 0 1px 1px; }
.row { display: flex; gap: 1px; }
.key {
  display: flex;
  width: 21px;
  height: 21px;
  padding: 2px 0 0 5px;
  background: #333;
  line-height: 16px;
  white-space: nowrap;
}
.key svg { margin-top: 1px; }
.key.icon { padding: 0; align-items: center; justify-content: center; }
.key.icon svg { margin: 0; }
.key.two { padding: 5px 4px 0 2px; justify-content: space-between; }
.key s { font-size: 10px; line-height: 8px; text-decoration: none; color: #888; }
.key.tiny { font-size: 6px; line-height: 9px; color: #ccc; }
.key.on { background: #4a5f16; }
.w27 { width: 27px; }
.w32 { width: 32px; }
.w44 { width: 44px; }
.w55 { width: 55px; }
.key.fill { flex: 1; }
.key.side { width: 11px; margin-left: 5px; padding-left: 4px; overflow: hidden; }
```
